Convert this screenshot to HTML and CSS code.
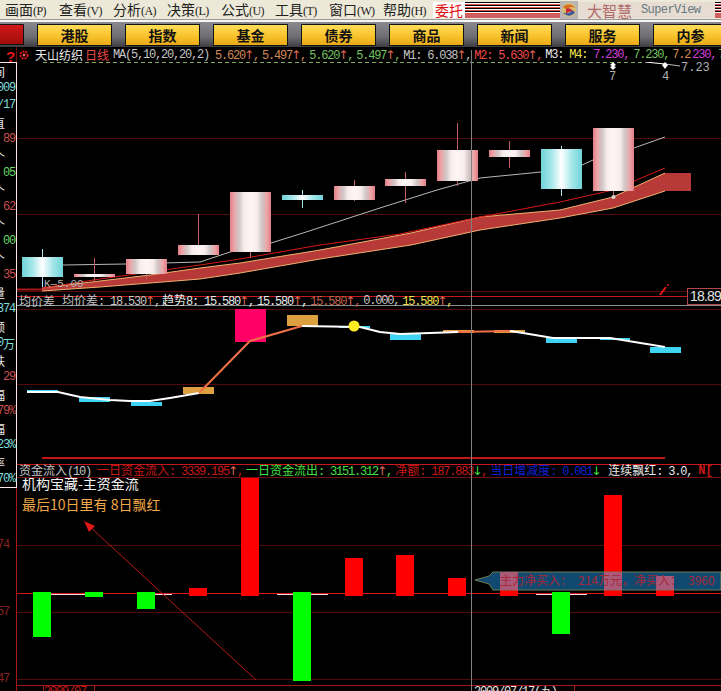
FILE: index.html
```html
<!DOCTYPE html>
<html lang="zh-CN">
<head>
    <meta charset="UTF-8">
    <title>大智慧 SuperView</title>
    <link rel="stylesheet" href="styles.css">
</head>
<body>
    <header class="menubar">
        <nav class="menu">
            <a>画面<small>(P)</small></a>
            <a>查看<small>(V)</small></a>
            <a>分析<small>(A)</small></a>
            <a>决策<small>(L)</small></a>
            <a>公式<small>(U)</small></a>
            <a>工具<small>(T)</small></a>
            <a>窗口<small>(W)</small></a>
            <a>帮助<small>(H)</small></a>
        </nav>
        <div class="entrust">委托</div>
        <div class="stripes"></div>
        <svg class="swirl" width="18" height="18" viewBox="0 0 18 18">
            <rect width="18" height="18" fill="#b9b4b4"/>
            <circle cx="9" cy="9" r="7" fill="#d8c070"/>
            <path d="M3 6 C7 2 13 3 15 7 C12 5 8 6 7 9 Z" fill="#d86a20"/>
            <path d="M15 11 C12 16 6 16 3 11 C6 13 10 13 12 9 Z" fill="#3a5aa8"/>
            <path d="M6 8 C9 6 12 8 13 11 C10 10 8 11 6 13 Z" fill="#c82838"/>
        </svg>
        <div class="brand"><span class="brand-cn">大智慧</span><span class="brand-en">SuperView</span></div>
        <div class="stripes end"></div>
    </header>

    <div class="toolbar">
        <div class="tool-red"></div>
        <button>港股</button>
        <button>指数</button>
        <button>基金</button>
        <button>债券</button>
        <button>商品</button>
        <button>新闻</button>
        <button>服务</button>
        <button>内参</button>
    </div>

    <main class="main">
        <aside class="side">
            <div class="corner"><span>?</span></div>
            <div class="quote">
                <div class="lbl">间</div>
                <div class="cyan">009</div>
                <div class="cyan">/17</div>
                <div class="lbl">直</div>
                <div class="red">89</div>
                <div class="lbl">个</div>
                <div class="green">05</div>
                <div class="lbl">个</div>
                <div class="red">62</div>
                <div class="lbl">个</div>
                <div class="green">00</div>
                <div class="lbl">个</div>
                <div class="red">35</div>
                <div class="lbl">量</div>
                <div class="cyan">374</div>
                <div class="lbl">额</div>
                <div class="cyan">0<span class="cn">万</span></div>
                <div class="lbl">跌</div>
                <div class="red">29</div>
                <div class="lbl">幅</div>
                <div class="red">79%</div>
                <div class="lbl">幅</div>
                <div class="cyan">23%</div>
                <div class="lbl">率</div>
                <div class="cyan">70%</div>
            </div>
            <div class="axis">
                <div>74</div>
                <div>57</div>
                <div>47</div>
            </div>
        </aside>

        <section class="chart">
            <div class="legend top">
                <svg class="legend-icon" width="10" height="10" viewBox="0 0 10 10">
                    <circle cx="5" cy="5" r="3.6" fill="none" stroke="#e01818" stroke-width="2" stroke-dasharray="2 1"/>
                    <circle cx="5" cy="5" r="1.4" fill="#f06060"/>
                </svg>
                <span class="cn c-white name">天山纺织</span>
                <span class="cn c-hot period">日线</span>
                <span class="c-gray ma">MA(5,10,20,20,2)</span>
                <span class="it c-orange">5.620<i class="up">↑</i>,</span>
                <span class="it c-orange">5.497<i class="up">↑</i>,</span>
                <span class="it c-moss">5.620<i class="up">↑</i>,</span>
                <span class="it c-moss">5.497<i class="up">↑</i>,</span>
                <span class="it c-gray">M1: 6.038<i class="up">↑</i>,</span>
                <span class="it c-hot">M2: 5.630<i class="up">↑</i>,</span>
                <span class="c-white m3">M3:</span>
                <span class="c-yellow m4">M4:</span>
                <span class="c-magenta m5">7.230,</span>
                <span class="c-moss m6">7.230,</span>
                <span class="c-orange m7">7.2</span>
                <span class="c-magenta m8">230,</span>
                <span class="c-moss">7</span>
            </div>

            <svg class="pane kline" width="704" height="234" viewBox="17 62 704 234">
                <defs>
                    <linearGradient id="pink">
                        <stop offset="0" stop-color="#e27c84"/>
                        <stop offset=".1" stop-color="#eda5a8"/>
                        <stop offset=".22" stop-color="#cfc6c6"/>
                        <stop offset=".34" stop-color="#f8ecec"/>
                        <stop offset=".5" stop-color="#fff5f4"/>
                        <stop offset=".66" stop-color="#f8ecec"/>
                        <stop offset=".78" stop-color="#cfc6c6"/>
                        <stop offset=".9" stop-color="#eda5a8"/>
                        <stop offset="1" stop-color="#e27c84"/>
                    </linearGradient>
                    <linearGradient id="cyan">
                        <stop offset="0" stop-color="#6ed4d8"/>
                        <stop offset=".25" stop-color="#a4e6e8"/>
                        <stop offset=".5" stop-color="#ffffff"/>
                        <stop offset=".75" stop-color="#a4e6e8"/>
                        <stop offset="1" stop-color="#6ed4d8"/>
                    </linearGradient>
                </defs>

                <path class="dash" d="M43 62.5H645"/>
                <path class="grid" d="M17 138.5H721M17 214.5H721M17 291.5H687"/>
                <path class="axis-line" d="M17 289.5H42" stroke-width="2"/>

                <polygon class="band" points="42,288 100,281 150,275 200,268 240,263 320,250 411,233 480,217 560,210 613,197 665,173 691,173 691,191 665,191 613,208 560,218 480,230 411,245 320,259 240,273 200,279 150,283 100,287 42,291"/>
                <polyline class="band-edge" points="42,288 100,281 150,275 200,268 240,263 320,250 411,233 480,217 560,210 613,197 665,173"/>
                <polyline class="band-edge" points="42,291 100,287 150,283 200,279 240,273 320,259 411,245 480,230 560,218 613,208 665,191"/>
                <polyline class="ma-red" points="42,288 100,279 150,272 200,265 240,259 320,245 400,234 480,217 560,202 613,190 665,168"/>
                <polyline class="ma-gray" points="63,265 126,264 200,262 230,252 271,243 303,233 383,207 437,190 480,178 541,172 582,165 593,160 634,148 665,137"/>

                <text class="note" x="44" y="287">K—5.00</text>

                <g class="wick-c">
                    <path d="M42.5 249V287"/>
                    <path d="M302.5 190V208"/>
                    <path d="M561.5 146V196"/>
                </g>
                <g class="wick-p">
                    <path d="M94.5 258V282"/>
                    <path d="M146.5 259V279"/>
                    <path d="M198.5 214V245"/>
                    <path d="M250.5 192V258"/>
                    <path d="M354.5 180V201"/>
                    <path d="M405.5 172V203"/>
                    <path d="M457.5 123V186"/>
                    <path d="M509.5 141V168"/>
                    <path d="M613.5 128V197"/>
                </g>
                <g fill="url(#cyan)">
                    <rect x="22" y="257" width="41" height="20"/>
                    <rect x="282" y="195" width="41" height="5"/>
                    <rect x="541" y="149" width="41" height="40"/>
                </g>
                <g fill="url(#pink)">
                    <rect x="74" y="274" width="41" height="3"/>
                    <rect x="126" y="259" width="41" height="15"/>
                    <rect x="178" y="245" width="41" height="10"/>
                    <rect x="230" y="192" width="41" height="60"/>
                    <rect x="334" y="186" width="41" height="14"/>
                    <rect x="385" y="179" width="41" height="7"/>
                    <rect x="437" y="150" width="41" height="31"/>
                    <rect x="489" y="150" width="41" height="7"/>
                    <rect x="593" y="128" width="41" height="63"/>
                </g>
                <circle cx="613.5" cy="197" r="2" fill="#d8d8d8"/>

                <path class="high-line" d="M645 62L665 64"/>
                <path class="ma-gray" d="M665 64L680 66"/>
                <path class="tip" d="M613 62l3 3-2 1 2 1-3 3-3-3 2-1-2-1z"/>
                <path class="tip" d="M665 62l3 3-3 4-3-4z"/>
                <text class="note big" x="609" y="80">7</text>
                <text class="note big" x="662" y="80">4</text>
                <text class="note big" x="681" y="71">7.23</text>

                <path class="flag" d="M660 295L666 287"/>
                <circle cx="668" cy="285" r="1" fill="#e01818"/>
            </svg>

            <div class="legend mid">
                <span class="cn c-gray avg">均价差</span>
                <span class="it2 c-gray"><span class="cn">均价差</span>: 18.530<i class="up">↑</i>,</span>
                <span class="it c-white"><span class="cn">趋势</span>8: 15.580<i class="up">↑</i>,</span>
                <span class="it c-white">15.580<i class="up">↑</i>,</span>
                <span class="it c-salmon">15.580<i class="up">↑</i>,</span>
                <span class="it c-gray">0.000,</span>
                <span class="it c-yellow">15.580<i class="up">↑</i>,</span>
            </div>

            <svg class="pane trend" width="704" height="158" viewBox="17 306 704 158">
                <path class="grid" d="M17 309.5H721M17 384.5H721"/>
                <path class="thick" d="M42 458H665"/>

                <g fill="#40d4f4">
                    <rect x="27" y="390" width="31" height="3"/>
                    <rect x="79" y="397" width="31" height="5"/>
                    <rect x="131" y="402" width="31" height="4"/>
                    <rect x="339" y="326" width="31" height="2"/>
                    <rect x="390" y="334" width="31" height="6"/>
                    <rect x="546" y="338" width="31" height="5"/>
                    <rect x="600" y="338" width="30" height="2"/>
                    <rect x="650" y="347" width="31" height="6"/>
                </g>
                <g fill="#dca040">
                    <rect x="183" y="387" width="31" height="7"/>
                    <rect x="287" y="315" width="31" height="11"/>
                    <rect x="443" y="330" width="31" height="3"/>
                    <rect x="494" y="330" width="31" height="3"/>
                </g>
                <rect x="235" y="309" width="31" height="33" fill="#ff0066"/>

                <polyline class="trend-white" points="27,392 58,392 80,397 110,400 130,401 150,401 170,398 199,393"/>
                <polyline class="trend-orange" points="199,393 250,341 302,326"/>
                <polyline class="trend-white" points="302,326 360,327 380,332 400,334 430,333 458,332"/>
                <polyline class="trend-orange" points="458,332 510,331"/>
                <polyline class="trend-white" points="510,331 523,333 553,338 610,338 665,347"/>
                <circle cx="354" cy="326" r="5.5" fill="#ffee22"/>
            </svg>

            <div class="legend low">
                <span class="c-gray src"><span class="cn">资金流入</span>(10)</span>
                <span class="it c-red"><span class="cn">一日资金流入</span>: 3339.195<i class="up">↑</i>,</span>
                <span class="it c-lime"><span class="cn">一日资金流出</span>: 3151.312<i class="up">↑</i>,</span>
                <span class="it c-red"><span class="cn">净额</span>: 187.883<i class="down">↓</i>,</span>
                <span class="c-blue rate"><span class="cn">当日增减度</span>: 0.081<i class="down">↓</i></span>
                <span class="c-white days"><span class="cn">连续飘红</span>: 3.0,</span>
                <span class="c-red mark">N[ N</span>
            </div>

            <svg class="pane flow" width="704" height="207" viewBox="17 478 704 207">
                <path class="grid" d="M17 545.5H721M17 612.5H721M17 679.5H721"/>
                <path class="zero" d="M17 593.5H721"/>
                <path class="stub" d="M50 594.5H85M137 594.5H172M277 594.5H328M536 594.5H587"/>

                <g fill="#00ff00">
                    <rect x="33" y="592" width="18" height="45"/>
                    <rect x="85" y="592" width="18" height="5"/>
                    <rect x="137" y="592" width="18" height="17"/>
                    <rect x="293" y="592" width="18" height="89"/>
                    <rect x="552" y="592" width="18" height="42"/>
                </g>
                <g fill="#ff0000">
                    <rect x="189" y="588" width="18" height="8"/>
                    <rect x="241" y="477" width="18" height="119"/>
                    <rect x="345" y="558" width="18" height="38"/>
                    <rect x="396" y="555" width="18" height="41"/>
                    <rect x="448" y="578" width="18" height="18"/>
                    <rect x="500" y="574" width="18" height="22"/>
                    <rect x="604" y="495" width="18" height="101"/>
                    <rect x="656" y="576" width="18" height="20"/>
                </g>

                <text class="title" x="22" y="489">机构宝藏-主资金流</text>
                <text class="subtitle" x="22" y="510">最后10日里有 8日飘红</text>

                <path class="pointer" d="M256 680L88 525"/>
                <polygon points="84,521 95,526 89,532" fill="#e01818"/>

                <polygon class="callout" points="475,580 489,576 493,572 721,572 721,590 493,590 489,584"/>
                <g class="callout-bars">
                    <rect x="500" y="572" width="18" height="18"/>
                    <rect x="604" y="572" width="18" height="18"/>
                    <rect x="656" y="576" width="18" height="14"/>
                </g>
                <text class="callout-text" x="500" y="585">主力净买入：　214万元，净买入：&#8194;3960</text>
            </svg>

            <div class="dates">
                <span class="date-first">2009/07</span>
                <span class="date-cur">2009/07/17(五)</span>
            </div>

            <div class="cross"></div>
            <div class="last-price">18.89</div>
        </section>
    </main>
</body>
</html>
```

FILE: styles.css
```css
html, body {
    margin: 0;
    padding: 0;
}
body {
    width: 721px;
    height: 691px;
    overflow: hidden;
    background-color: #000;
    font-family: "Noto Sans CJK SC", sans-serif;
}

/* menu bar */
.menubar {
    display: flex;
    height: 20px;
    background-color: #ece9d8;
    border-bottom: 2px solid #f6f6f6;
    box-shadow: inset 0 -1px 0 #9a9a9a;
}
.menu {
    display: flex;
    gap: 10px;
    width: 428px;
    padding-left: 5px;
}
.menu a {
    width: 44px;
    flex: none;
    font-size: 14px;
    line-height: 19px;
    color: #222;
    white-space: nowrap;
}
.menu small {
    font-family: "Liberation Serif", serif;
    font-size: 12px;
    letter-spacing: -.6px;
}
.entrust {
    width: 32px;
    height: 16px;
    margin-top: 2px;
    background-color: #fff;
    color: #e01010;
    font-size: 14px;
    line-height: 16px;
    text-align: center;
}
.stripes {
    width: 95px;
    height: 16px;
    margin-top: 2px;
    background: repeating-linear-gradient(#000 0, #000 1px, #fff 1px, #fff 2px, #d85050 2px, #d85050 3px) 0 0 / 100% 12px no-repeat, #d06060;
}
.stripes.end {
    width: 6px;
}
.swirl {
    margin-top: 1px;
}
.brand {
    display: flex;
    align-items: center;
    width: 137px;
    height: 16px;
    margin-top: 2px;
    background-color: #e6dcd2;
}
.brand-cn {
    margin-left: 9px;
    color: #b06868;
    font-size: 15px;
}
.brand-en {
    margin-left: 9px;
    color: #66787e;
    font-family: "Liberation Mono", monospace;
    font-size: 12px;
    letter-spacing: -.6px;
}

/* toolbar */
.toolbar {
    display: flex;
    align-items: center;
    gap: 13px;
    height: 25px;
    background: linear-gradient(#8a8a8e, #6e6e72 60%, #3c3c40);
}
.tool-red {
    width: 24px;
    height: 21px;
    flex: none;
    background: linear-gradient(#d01818, #a00c0c);
    border: solid #111;
    border-width: 1px 1px 1px 0;
    box-sizing: border-box;
}
.toolbar button {
    width: 75px;
    height: 22px;
    flex: none;
    padding: 0;
    border: 1px solid #111;
    background: linear-gradient(#ffde5a, #f8c32c 55%, #e8a818);
    color: #111;
    font-family: "Noto Sans CJK SC", sans-serif;
    font-size: 14px;
    font-weight: bold;
    line-height: 18px;
}

/* page body */
.main {
    display: flex;
    height: 644px;
}
.side {
    width: 17px;
    flex: none;
    overflow: hidden;
    font-family: "Liberation Mono", monospace;
    font-size: 12px;
    letter-spacing: -1.2px;
}
.corner {
    height: 15px;
    box-sizing: border-box;
    border-right: 1px solid #701010;
    overflow: hidden;
}
.corner span {
    color: #e01818;
    font-family: "Liberation Sans", sans-serif;
    font-size: 15px;
    font-weight: bold;
    line-height: 20px;
    margin-left: 6px;
}
.quote {
    border: solid #ffe6e6;
    border-width: 1px 1px 1px 0;
    box-sizing: border-box;
    height: 426px;
}
.quote div {
    display: flex;
    justify-content: flex-end;
    height: 17px;
    padding-right: 1px;
    line-height: 17px;
    white-space: nowrap;
}
.quote .lbl {
    justify-content: flex-start;
    margin-left: -7px;
    color: #e8e8e8;
    font-family: "Noto Sans CJK SC", sans-serif;
    letter-spacing: 0;
}
.cn {
    font-family: "Noto Sans CJK SC", sans-serif;
    letter-spacing: 0;
}
.cyan { color: #7fdede; }
.red { color: #c85050; }
.green { color: #66d866; }

.axis {
    box-sizing: border-box;
    height: 203px;
    padding-top: 50px;
    border-right: 1px solid #a81818;
    color: #8a2020;
}
.axis div {
    width: 12px;
    height: 14px;
    margin-left: -3px;
    margin-bottom: 53px;
    line-height: 14px;
}

/* chart panes */
.chart {
    position: relative;
    width: 704px;
    flex: none;
    overflow: hidden;
}
.pane {
    display: block;
}
.legend {
    display: flex;
    align-items: center;
    box-sizing: border-box;
    padding-left: 2px;
    font-family: "Liberation Mono", monospace;
    font-size: 12px;
    line-height: 12px;
    letter-spacing: -1.2px;
    white-space: pre;
    overflow: visible;
}
.legend.top {
    height: 15px;
    padding-top: 1px;
}
.legend.mid {
    height: 10px;
    border-top: 1px solid #c81818;
    border-bottom: 1px solid #8c8c8c;
}
.legend.low {
    height: 14px;
    border-top: 1px solid #c81818;
    border-bottom: 1px solid #701010;
}
.legend i {
    display: inline-block;
    width: 8px;
    font-family: "DejaVu Sans", sans-serif;
    font-style: normal;
    letter-spacing: 0;
    text-indent: -1px;
    overflow: visible;
}
.legend .up { color: #e06a58; }
.legend .down { color: #40e040; }
.it {
    margin-right: 3px;
}

.legend-icon { flex: none; margin-right: 6px; }
.name { margin-right: 2px; }
.period { margin-right: 4px; }
.ma { margin-right: 6px; }
.m3, .m4 { margin-right: 6px; }
.m5 { margin-right: 4px; }
.m6 { margin-right: 3px; }
.m7 { margin-right: 2px; }
.m8 { margin-right: 2px; }
.avg { margin-right: 7px; }
.it2 { margin-right: 2px; }
.src { margin-right: 6px; }
.rate { margin-right: 8px; }
.days { margin-right: 6px; }
.mark { font-weight: bold; letter-spacing: 0; }

.c-white { color: #e8e8e8; }
.c-gray { color: #c4c4c4; }
.c-orange { color: #d48a58; }
.c-moss { color: #74c060; }
.c-hot { color: #f04848; }
.c-yellow { color: #eee050; }
.c-magenta { color: #d040d8; }
.c-salmon { color: #c0604c; }
.c-red { color: #c81818; }
.c-lime { color: #40e040; }
.c-blue { color: #1020d0; }

svg text {
    font-family: "Noto Sans CJK SC", sans-serif;
}
.grid {
    fill: none;
    stroke: #520a0a;
    stroke-width: 1;
}
.dash {
    fill: none;
    stroke: #86a85c;
    stroke-width: 1;
    stroke-dasharray: 4 3;
}
.axis-line {
    fill: none;
    stroke: #a81818;
}
.band {
    fill: #b83a38;
}
.band-edge {
    fill: none;
    stroke: #f0b070;
    stroke-width: 1;
}
.ma-red {
    fill: none;
    stroke: #d81818;
    stroke-width: 1;
}
.ma-gray {
    fill: none;
    stroke: #b8b8b8;
    stroke-width: 1;
}
.wick-c path {
    fill: none;
    stroke: #a8e4e8;
}
.wick-p path {
    fill: none;
    stroke: #c06060;
}
svg .note {
    fill: #b0b0b0;
    font-family: "Liberation Mono", monospace;
    font-size: 11px;
}
svg .note.big {
    font-size: 12px;
}
.high-line {
    fill: none;
    stroke: #fff;
}
.tip {
    fill: #fff;
}
.flag {
    fill: none;
    stroke: #e01818;
    stroke-width: 2;
}

.thick {
    fill: none;
    stroke: #c01818;
    stroke-width: 2;
}
.trend-white {
    fill: none;
    stroke: #fff;
    stroke-width: 2;
}
.trend-orange {
    fill: none;
    stroke: #f07048;
    stroke-width: 2;
}

.zero {
    fill: none;
    stroke: #d81818;
    stroke-width: 1;
}
.stub {
    fill: none;
    stroke: #f0d8d8;
    stroke-width: 1;
}
svg .title {
    fill: #f4f4f4;
    font-size: 14px;
}
svg .subtitle {
    fill: #f0a848;
    font-size: 14px;
}
.pointer {
    fill: none;
    stroke: #b81818;
    stroke-width: 1;
}
.callout {
    fill: #104a70;
    stroke: #6f7a50;
    stroke-width: 1;
}
.callout-bars {
    fill: #a85a78;
}
svg .callout-text {
    fill: #a82838;
    font-size: 12px;
}

.dates {
    display: flex;
    height: 6px;
    box-sizing: border-box;
    border-top: 1px solid #a81818;
    overflow: hidden;
    font-family: "Liberation Mono", monospace;
    font-size: 12px;
    letter-spacing: -1.2px;
    line-height: 12px;
}
.date-first {
    margin-left: 26px;
    width: 52px;
    color: #c81818;
    border: solid #a81818;
    border-width: 0 1px;
    box-sizing: border-box;
}
.date-cur {
    margin-left: 376px;
    width: 104px;
    padding-left: 2px;
    color: #e8e8e8;
    border: solid #a81818;
    border-width: 0 1px;
    box-sizing: border-box;
}

/* overlays */
.cross {
    position: absolute;
    left: 454px;
    top: 3px;
    bottom: 0;
    width: 1px;
    background-color: #808080;
}
.last-price {
    position: absolute;
    right: -6px;
    top: 241px;
    width: 40px;
    height: 17px;
    box-sizing: border-box;
    border: 1px solid #b04848;
    background-color: #000;
    color: #e4e4e4;
    font-family: "Liberation Sans", sans-serif;
    font-size: 14px;
    letter-spacing: -.8px;
    line-height: 15px;
    padding-left: 2px;
    overflow: hidden;
    white-space: nowrap;
}
```
